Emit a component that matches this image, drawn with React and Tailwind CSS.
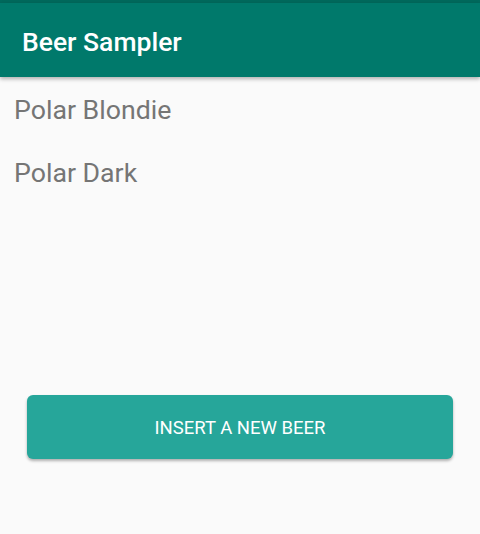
import React from 'react';

const beers = ["Polar Blondie", "Polar Dark"];

export default function App() {
  return (
    <div className="w-[480px] h-[534px] bg-[#fafafa] flex flex-col" style={{ fontFamily: 'Roboto, "Liberation Sans", sans-serif' }}>
      {/* status strip + toolbar */}
      <div className="h-[3px] bg-[#00695c]" />
      <div className="h-[74px] bg-[#00796b] flex items-center px-[22px] pt-[3px] shadow-[0_2px_4px_rgba(0,0,0,0.3)] z-10">
        <h1 className="text-white text-[26.5px] font-medium">Beer Sampler</h1>
      </div>

      {/* beer list */}
      <div className="flex flex-col px-[14px] pt-[15px]">
        {beers.map((name) => (
          <div key={name} className="h-[63px] text-[26.7px] leading-[36px] text-[#757575]">
            {name}
          </div>
        ))}
      </div>

      <div className="flex-1 flex flex-col justify-end px-[27px] pb-[75px]">
        <button className="h-[64px] w-full rounded-[6px] bg-[#26a69a] text-white text-[18.5px] uppercase pt-[3px] shadow-[0_2px_3px_rgba(0,0,0,0.3)]">
          Insert a new beer
        </button>
      </div>
    </div>
  );
}
